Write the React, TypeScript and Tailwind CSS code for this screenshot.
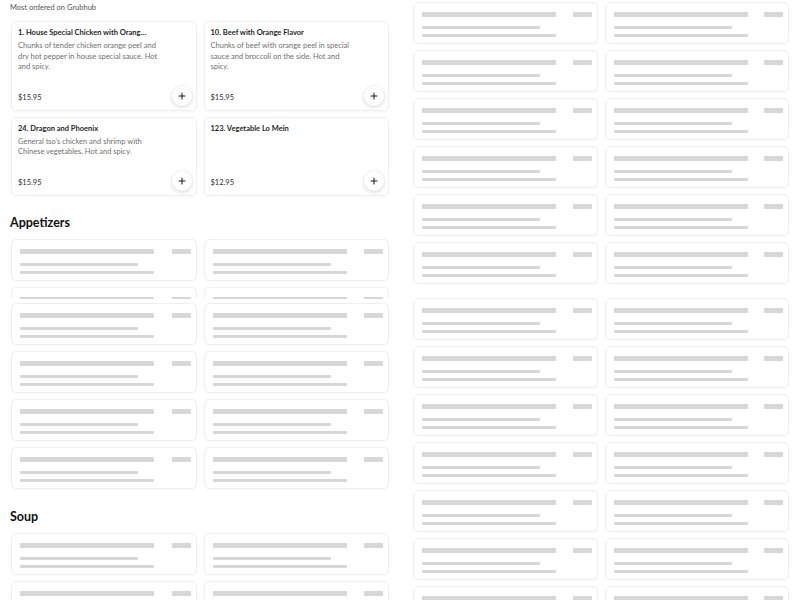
import { Plus } from "lucide-react";

type Item = { name: string; desc?: string; price: string };

const BEST: Item[] = [
  {
    name: "1. House Special Chicken with Orange Peel",
    desc: "Chunks of tender chicken orange peel and dry hot pepper in house special sauce. Hot and spicy.",
    price: "$15.95",
  },
  {
    name: "10. Beef with Orange Flavor",
    desc: "Chunks of beef with orange peel in special sauce and broccoli on the side. Hot and spicy.",
    price: "$15.95",
  },
  {
    name: "24. Dragon and Phoenix",
    desc: "General tso's chicken and shrimp with Chinese vegetables. Hot and spicy.",
    price: "$15.95",
  },
  { name: "123. Vegetable Lo Mein", price: "$12.95" },
];

function ItemCard({ item }: { item: Item }) {
  return (
    <div className="flex flex-col rounded-[5px] border border-[#efefef] bg-white pt-[5px] pr-[4px] pb-[4px] pl-[6px] shadow-[0_1px_3px_rgba(0,0,0,0.04)]">
      <p className="max-w-[132px] truncate text-[7.5px] leading-[11px] font-bold text-[#1f1f1f]">
        {item.name}
      </p>
      <p className="mt-[3px] min-h-[21px] max-w-[145px] text-[7.5px] leading-[10.5px] text-[#6f6f6f]">
        {item.desc}
      </p>
      <div className="mt-auto flex items-end justify-between pt-[13px]">
        <span className="mb-[3px] text-[7.5px] leading-[10px] text-[#2a2a2a]">{item.price}</span>
        <button className="flex h-[20px] w-[20px] items-center justify-center rounded-full bg-white shadow-[0_1px_4px_rgba(0,0,0,0.18)]">
          <Plus className="h-[10px] w-[10px] text-[#1a1a1a]" strokeWidth={2.5} />
        </button>
      </div>
    </div>
  );
}

function SkeletonCard() {
  return (
    <div className="h-[42px] rounded-[5px] border border-[#efefef] bg-white pt-[9px] pr-[5px] pb-[6px] pl-[8px] shadow-[0_1px_3px_rgba(0,0,0,0.03)]">
      <div className="flex items-center justify-between">
        <div className="h-[5px] w-[134px] rounded-[1px] bg-[#d7d7da]" />
        <div className="h-[5px] w-[19px] rounded-[1px] bg-[#d7d7da]" />
      </div>
      <div className="mt-[9px] h-[3px] w-[118px] rounded-[1px] bg-[#d7d7da]" />
      <div className="mt-[5px] h-[3px] w-[134px] rounded-[1px] bg-[#d7d7da]" />
    </div>
  );
}

function SkeletonRows({ rows }: { rows: number }) {
  return (
    <div className="grid grid-cols-2 gap-x-[7px] gap-y-[6px]">
      {Array.from({ length: rows * 2 }).map((_, i) => (
        <SkeletonCard key={i} />
      ))}
    </div>
  );
}

function SectionTitle({ children }: { children: string }) {
  return <h2 className="text-[12.5px] leading-[16px] font-bold text-[#111]">{children}</h2>;
}

export default function App() {
  return (
    <div
      className="h-[600px] w-[800px] overflow-hidden bg-white"
      style={{ fontFamily: "Lato, 'Liberation Sans', sans-serif" }}
    >
      <div className="grid grid-cols-[379px_377px] gap-x-[23px] pl-[10px]">
        <div className="-mt-[13px]">
          <SectionTitle>Best sellers</SectionTitle>
          <p className="text-[7.5px] leading-[10px] text-[#555]">Most ordered on Grubhub</p>
          <div className="mt-[8px] grid grid-cols-2 gap-x-[7px] gap-y-[6px] pl-[1px]">
            {BEST.map((item) => (
              <ItemCard key={item.name} item={item} />
            ))}
          </div>

          <div className="mt-[19px]">
            <SectionTitle>Appetizers</SectionTitle>
            <div className="mt-[8px] flex flex-col pl-[1px]">
              <SkeletonRows rows={1} />
              <div className="mt-[6px] h-[12px] overflow-hidden">
                <SkeletonRows rows={1} />
              </div>
              <div className="mt-[4px]">
                <SkeletonRows rows={4} />
              </div>
            </div>
          </div>

          <div className="mt-[20px]">
            <SectionTitle>Soup</SectionTitle>
            <div className="mt-[8px] pl-[1px]">
              <SkeletonRows rows={2} />
            </div>
          </div>
        </div>

        <div className="flex flex-col pt-[2px] pl-[1px]">
          <SkeletonRows rows={6} />
          <div className="mt-[14px]">
            <SkeletonRows rows={7} />
          </div>
        </div>
      </div>
    </div>
  );
}
